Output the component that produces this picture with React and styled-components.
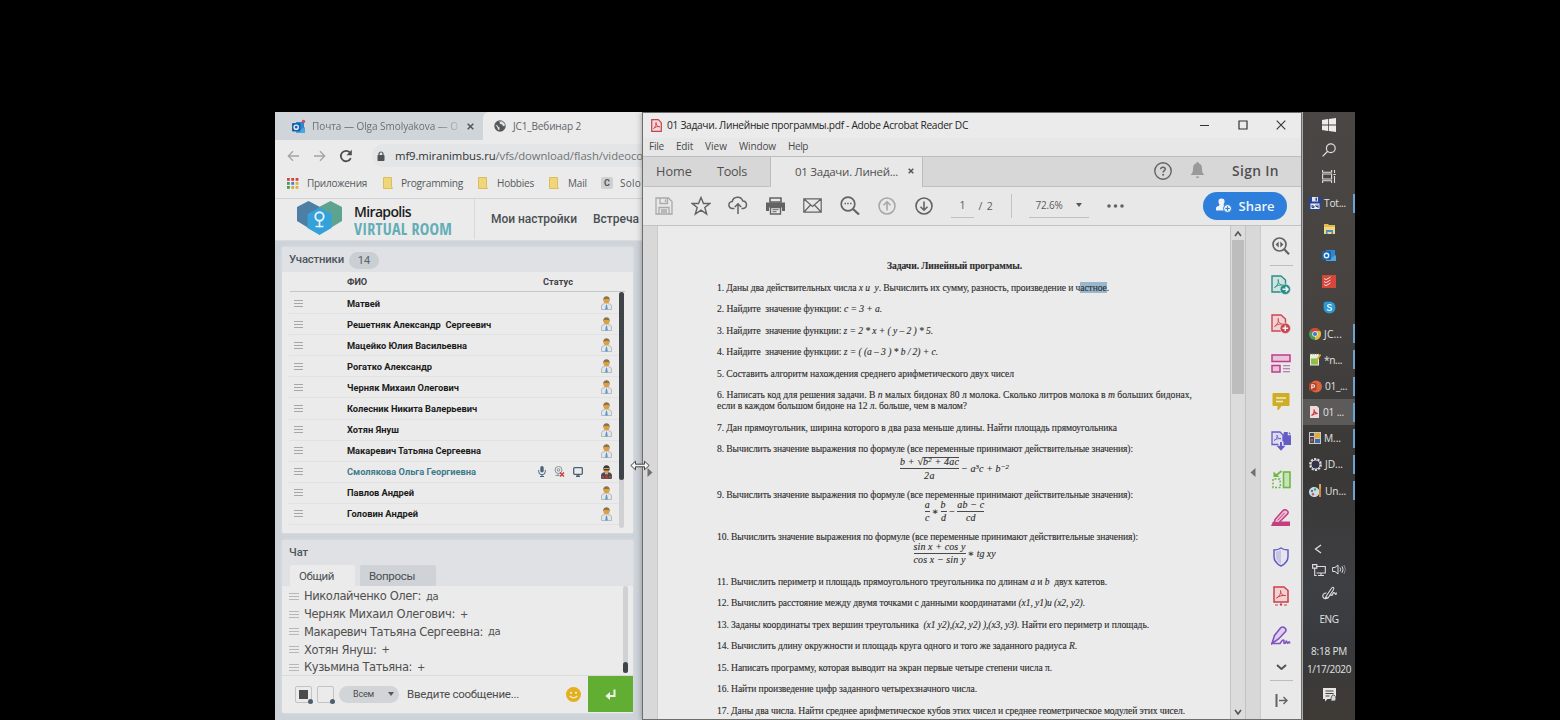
import React, { useLayoutEffect, useRef } from "react";
import styled, { createGlobalStyle } from "styled-components";

const GlobalStyle = createGlobalStyle`
  * { box-sizing: border-box; }
  body { margin: 0; background: #000; overflow: hidden; }
`;

const ui = `"Open Sans", "Noto Sans", sans-serif`;
const roboto = `Roboto, "Liberation Sans", sans-serif`;
const serif = `"Liberation Serif", "DejaVu Serif", serif`;

/* Text whose letter spacing is adjusted so the run spans a given width. */
const Run = styled.span`
  display: inline-block;
  flex: none;
  white-space: pre;
  font-family: ${(p) => p.$font || "inherit"};
  font-size: ${(p) => (p.$size ? p.$size + "px" : "inherit")};
  font-weight: ${(p) => p.$weight || "inherit"};
  color: ${(p) => p.$color || "inherit"};
  margin-left: ${(p) => p.$ml || 0}px;
`;
function Fit({ w, children, ...rest }) {
  const ref = useRef(null);
  useLayoutEffect(() => {
    const el = ref.current;
    el.style.letterSpacing = "0px";
    const natural = el.getBoundingClientRect().width;
    const n = el.textContent.length;
    el.style.letterSpacing = (w - natural) / n + "px";
    el.style.width = w + "px";
  }, [w]);
  return <Run ref={ref} {...rest}>{children}</Run>;
}
const IconBox = styled.span`display: flex; flex: none; margin-left: ${(p) => p.$ml || 0}px;`;

const Screen = styled.div`
  width: 1560px; height: 720px; padding: 112px 205px 0 275px;
  background: #000; overflow: hidden;
`;
const Desktop = styled.div`
  position: relative; display: flex; width: 1080px; height: 608px; overflow: hidden;
`;

/* ---------- Browser ---------- */
const Browser = styled.section`
  width: 367px; height: 608px; flex: none; overflow: hidden;
  display: flex; flex-direction: column; background: #cdd3d9;
`;
const TabStrip = styled.div`
  height: 28px; flex: none; display: flex; background: #d0d5da; font-family: ${ui};
`;
const BrowserTab = styled.div`
  width: ${(p) => p.$w}px; flex: none; display: flex; align-items: center;
  padding-left: ${(p) => p.$pl}px;
  background: ${(p) => (p.$active ? "#ebebeb" : "transparent")};
  border-radius: ${(p) => (p.$active ? "6px 0 0 0" : 0)};
`;
const Faded = styled.div`
  display: flex; width: 153px; flex: none;
  mask-image: linear-gradient(90deg, #000 84%, rgba(0,0,0,.25));
`;
const AddressRow = styled.div`
  height: 31px; flex: none; display: flex; align-items: center; background: #ebebeb; padding-left: 12px; overflow: hidden;
`;
const NavIcons = styled.div`display: flex; gap: 13px; width: 85px; flex: none; align-items: center;`;
const Omnibox = styled.div`
  width: 282px; height: 23px; flex: none; background: #e4e5e6; border-radius: 12px 0 0 12px;
  display: flex; align-items: center; padding-left: 5px; color: #707375; font-family: ${ui};
  b { font-weight: 400; color: #303234; }
`;
const Bookmarks = styled.div`
  height: 28px; flex: none; display: flex; align-items: center; background: #ebebeb;
  border-bottom: 1px solid #d2d3d4; padding: 0 0 3px 12px; font-family: ${ui}; color: #55585b; overflow: hidden;
`;
const Letter = styled.span`
  width: 12px; height: 12px; background: #cfd0d1; color: #555; border-radius: 2px;
  font: 700 9px/12px ${roboto}; text-align: center;
`;
const RoomHeader = styled.div`
  height: 42px; flex: none; display: flex; background: #ebebeb; border-bottom: 1px solid #d9dcdf;
`;
const Brand = styled.div`
  width: 200px; display: flex; padding: 2px 0 0 21px; border-right: 1px solid #d7d8d9; height: 40px;
`;
const BrandText = styled.div`
  display: flex; flex-direction: column; padding: 3px 0 0 11px;
  font-family: "Liberation Sans Narrow", "Open Sans Condensed", ${roboto};
`;
const BrandLine = styled.div`height: ${(p) => p.$h}px; display: flex; align-items: center; line-height: 1;`;
const RoomNav = styled.nav`
  display: flex; align-items: center; padding: 0 0 1px 16px; color: #4a4f54; font-family: ${roboto}; font-size: 12px;
`;
const Panel = styled.section`
  width: 351px; height: ${(p) => p.$h}px; margin: ${(p) => p.$mt}px 0 0 7px; flex: none;
  background: #ebebeb; display: flex; flex-direction: column; font-family: ${roboto};
  border-radius: 1px; box-shadow: 0 0 3px rgba(225, 229, 233, .9);
`;
const PanelHeader = styled.div`
  height: ${(p) => p.$h}px; flex: none; display: flex; align-items: center; padding-left: 7px;
  background: #dfe1e4; color: #4c555e;
`;
const Badge = styled.span`
  margin: 1px 0 0 5px; width: 30px; height: 17px; border-radius: 9px; background: #cacfd4;
  font-size: 11px; line-height: 17px; text-align: center; color: #59636c;
`;
const TableHead = styled.div`
  height: 20px; margin: 0 8px; flex: none; display: flex; align-items: center;
  border-bottom: 1px solid #c6c6c6; color: #3f4245; font-size: 9.2px; font-weight: 700;
`;
const TableBody = styled.div`display: flex; flex: 1; min-height: 0;`;
const People = styled.div`width: 330px; margin-left: 7px; padding-top: 1px; display: flex; flex-direction: column;`;
const Person = styled.div`
  height: 21.1px; flex: none; display: flex; align-items: center; padding-left: 5px;
  border-bottom: 1px solid #e2e2e3; font-size: 9.3px; font-weight: 700;
  color: ${(p) => (p.$self ? "#407b8c" : "#1c1c1c")};
`;
const Burger = styled.span`
  width: ${(p) => p.$w || 9}px; height: 7px; flex: none;
  border-top: 1px solid #a6a6a6; border-bottom: 1px solid #a6a6a6;
  display: flex; align-items: center;
  &::after { content: ""; width: 100%; height: 1px; background: #a6a6a6; }
`;
const StatusIcons = styled.div`
  margin-left: auto; display: flex; gap: 8px; align-items: center; padding-right: 18px;
`;
const AvatarSlot = styled.div`width: 18px; display: flex; margin-left: ${(p) => (p.$auto ? "auto" : 0)};`;
const Track = styled.div`
  width: 5px; height: ${(p) => p.$h}px; border-radius: 3px; background: #cfd1d3; display: flex; flex-direction: column;
  justify-content: ${(p) => (p.$end ? "flex-end" : "flex-start")};
`;
const Thumb = styled.div`height: ${(p) => p.$h}px; border-radius: 3px; background: #3e4447;`;

const ChatTabs = styled.div`height: 21px; flex: none; display: flex; gap: 5px; padding-left: 8px; background: #dfe1e4;`;
const ChatTab = styled.div`
  width: ${(p) => p.$w}px; height: 21px; padding-left: 9px; display: flex; align-items: center; font-size: 11.5px; color: #4b4f52;
  background: ${(p) => (p.$active ? "#ebebeb" : "#cfd2d6")}; border-radius: 2px 2px 0 0;
`;
const ChatBody = styled.div`height: 90px; flex: none; display: flex; border-bottom: 1px solid #d8dadb;`;
const Messages = styled.div`
  width: 341px; display: flex; flex-direction: column; padding: 1.5px 0 0 7px;
  font-family: "DejaVu Sans", Verdana, sans-serif; color: #505050;
`;
const Message = styled.div`height: 17.75px; flex: none; display: flex; align-items: center; ${Burger} { opacity: .75; margin-right: 5px; }`;
const Compose = styled.div`height: 36px; display: flex; align-items: center; padding-left: 13px; color: #4d4d4d;`;
const Swatch = styled.span`
  position: relative; width: 17px; height: 17px; margin-right: 5px; border: 1px solid #c3c3c3; border-radius: 2px; display: flex;
  align-items: center; justify-content: center; flex: none;
  &::before { content: ""; width: 9px; height: 9px; background: ${(p) => p.$fill}; }
  &::after {
    content: ""; position: absolute; right: -2px; bottom: -2px; width: 5px; height: 5px; border-radius: 50%;
    background: #4a6070;
  }
`;
const Recipient = styled.div`
  width: 60px; height: 17px; border-radius: 9px; background: #d2d5d8; margin-right: 8px; display: flex; align-items: center;
  padding-left: 14px; font-size: 9px; flex: none;
`;
const Caret = styled.span`
  border: ${(p) => p.$s || 3}px solid transparent; border-top: ${(p) => (p.$s || 3) + 1}px solid #55585b; border-bottom: 0;
  margin-left: ${(p) => p.$ml || 0}px;
`;
const SendButton = styled.button`
  width: 45px; height: 36px; border: 0; padding: 0; margin-left: 7px; background: #62ae32; display: flex;
  align-items: center; justify-content: center;
`;

/* ---------- Acrobat ---------- */
const Acrobat = styled.section`
  width: 660px; height: 608px; flex: none; display: flex; flex-direction: column; background: #ebebeb;
  border: 1px solid #6d6d6d; border-right-color: #6c6c6c; box-shadow: -1px 0 5px rgba(60, 60, 60, .35); z-index: 1;
  font-family: ${ui};
`;
const TitleBar = styled.div`
  height: 25px; flex: none; display: flex; align-items: center; padding: 0 15px 1px 8px; color: #252525;
`;
const WindowButtons = styled.div`margin-left: auto; display: flex; gap: 28px; align-items: center;`;
const MenuBar = styled.div`
  height: 18px; flex: none; display: flex; align-items: center; gap: 12px; padding: 0 0 2px 6px; color: #4a4a4a; font-size: 10px;
  background: #e7e7e7;
`;
const DocTabs = styled.div`
  height: 31px; flex: none; display: flex; background: #d7d7d7; border-top: 1px solid #bdbdbd; color: #505050;
`;
const DocTab = styled.div`
  width: ${(p) => p.$w}px; padding: 0 0 2px ${(p) => p.$pl}px; display: flex; align-items: center; flex: none;
  background: ${(p) => (p.$active ? "#e8e8e8" : "transparent")};
  border: solid ${(p) => (p.$active ? "#bcbcbc" : "transparent")}; border-width: 0 1px;
  box-shadow: ${(p) => (p.$active ? "none" : "inset 0 -1px #c0c0c0")};
`;
const TabActions = styled.div`
  flex: 1; display: flex; align-items: center; justify-content: flex-end; padding: 0 22px 3px 0; box-shadow: inset 0 -1px #c0c0c0;
`;
const Toolbar = styled.div`
  height: 39px; flex: none; display: flex; align-items: center; background: #e8e8e8; border-bottom: 1px solid #c2c2c2; padding: 0 0 1px 2px;
  color: #5b5b5b; font-size: 10.5px;
`;
const ToolSlot = styled.div`width: 37.2px; display: flex; justify-content: center; flex: none;`;
const Field = styled.div`
  width: ${(p) => p.$w}px; height: 24px; margin-left: ${(p) => p.$ml}px; border-bottom: 1px solid #c0c0c0; display: flex; align-items: center;
  padding-left: ${(p) => p.$pl}px; flex: none;
`;
const Separator = styled.span`width: 1px; height: 24px; background: #c3c3c3; margin-left: 17px;`;
const ShareButton = styled.button`
  width: 84px; height: 28px; margin-left: 79px; padding: 0 0 0 13px; border: 0; border-radius: 14px; background: #2d7fdb;
  display: flex; align-items: center; color: #f0f4f8; flex: none;
`;
const Workspace = styled.div`flex: 1; display: flex; min-height: 0;`;
const Gutter = styled.div`
  width: ${(p) => p.$w || 15}px; flex: none; background: #d8d8d8; display: flex; align-items: center; justify-content: center;
  border-left: ${(p) => (p.$line ? "1px solid #c2c2c2" : "0")}; border-right: 1px solid #cacaca;
`;
const Paper = styled.article`
  width: 572px; flex: none; overflow: hidden; background: #ebebeb; padding: 33.5px 39px 0 59px; display: flex; flex-direction: column;
  font-family: ${serif}; color: #2c2c2c; font-size: 9.6px; line-height: 12px; -webkit-text-stroke: .12px #333;
`;
const Block = styled.div`
  height: ${(p) => p.$h}px; flex: none; display: flex; flex-direction: column; width: 475px;
  align-items: ${(p) => (p.$center ? "center" : "flex-start")};
  font-weight: ${(p) => (p.$center ? 700 : 400)};
  line-height: ${(p) => p.$lh || 12}px;
`;
const Marked = styled.mark`background: #9bb7cb; color: #26343f; padding: 0;`;
const Formula = styled.div`
  height: ${(p) => p.$h}px; width: 475px; display: flex; align-items: center; justify-content: center; gap: 2px; font-style: italic; font-size: 10px;
  sup { font-size: 7px; line-height: 0; vertical-align: 3.5px; }
`;
const Fraction = styled.span`display: flex; flex-direction: column; align-items: center;`;
const Top = styled.span`
  border-bottom: 1px solid #4a4a4a; height: ${(p) => p.$h || 12}px; line-height: ${(p) => (p.$h ? 13 : 10)}px; display: flex; justify-content: center;
`;
const Bottom = styled.span`height: ${(p) => p.$h || 12}px; line-height: ${(p) => p.$h || 12}px; display: flex;`;
const Root = styled.span`border-top: 1px solid #4a4a4a; display: inline-block; height: 10px; line-height: 8px;`;
const ScrollColumn = styled.div`
  width: 15px; flex: none; border-left: 1px solid #c2c2c2; background: #dcdcdc; display: flex; flex-direction: column;
  align-items: center; padding: 5px 0 4px;
`;
const ScrollThumb = styled.div`width: 12px; height: 154px; background: #bdbdbd; margin: 3px 0 auto;`;
const ToolsPane = styled.aside`
  flex: 1; display: flex; flex-direction: column; align-items: center; background: #e9e9e9;
`;
const PaneItem = styled.div`height: ${(p) => p.$h}px; display: flex; align-items: center; justify-content: center; flex: none;`;
const PaneLine = styled.div`width: 23px; height: 1px; background: #bdbdbd; flex: none;`;

/* ---------- Taskbar ---------- */
const Taskbar = styled.aside`
  width: 53px; flex: none; border-left: 1px solid #b5b5b5; display: flex; flex-direction: column;
  background: linear-gradient(#4a4644, #464341 30%, #3a3837 60%, #3e3f43 78%, #393a3d 88%, #3f3a35);
  color: #e2e2e2; font-family: ${ui};
`;
const TaskItem = styled.div`
  height: ${(p) => p.$h || 26.15}px; flex: none; display: flex; align-items: center;
  justify-content: ${(p) => (p.$label ? "flex-start" : "center")}; padding-left: ${(p) => (p.$label ? 6 : 0)}px;
  background: ${(p) => (p.$active ? "#5d5b5a" : "transparent")};
  gap: 3px;
  &::after {
    content: ""; width: 2px; height: 19px; margin-left: auto;
    background: #6ba4cf; display: ${(p) => (p.$label ? "block" : "none")};
  }
`;
const Tray = styled.div`margin-top: auto; display: flex; flex-direction: column; align-items: center;`;
const TrayRow = styled.div`
  height: ${(p) => p.$h}px; display: flex; align-items: center; justify-content: center; gap: 6px; padding-right: ${(p) => p.$pr || 0}px;
`;
const ResizeCursor = styled.div`position: absolute; left: 355px; top: 348px; z-index: 3; display: flex;`;

/* ---------- Icons ---------- */
const Svg = ({ w, h, children, ...r }) => (
  <svg width={w} height={h} viewBox={`0 0 ${w} ${h}`} fill="none" {...r}>{children}</svg>
);
const OutlookIcon = () => (
  <Svg w={14} h={14}><path d="M4 2h9v9H4z" fill="#2d86d1" /><path d="M4 8l5 2 5-3v6H4z" fill="#4aa5e0" /><rect x="0" y="3" width="9" height="9" rx="1" fill="#1763ad" /><circle cx="4.500" cy="7.500" r="2.200" stroke="#eee" strokeWidth="1.400" /></Svg>
);
const OutlookTabIcon = () => (
  <Svg w={15} h={15}><path d="M5 3h8v9H5z" fill="#2d86d1" /><path d="M5 9l4 2 5-3v6H5z" fill="#4aa5e0" /><rect x="1" y="4" width="8.500" height="8.500" rx="1" fill="#1763ad" /><circle cx="5.200" cy="8.200" r="2.100" stroke="#eee" strokeWidth="1.400" /><circle cx="12.500" cy="2.500" r="1.700" fill="#d34b52" /></Svg>
);
const GlobeIcon = () => (
  <Svg w={12} h={12}><circle cx="6" cy="6" r="5.700" fill="#54585b" /><path d="M1.500 4.500l2 1 1 1.500 1.200.6-.5 2.600-1.200-.8-.6-2zM4.500 1.500l1.500 1-.3 1.500 2.200.3 1 1.700 1.600.3.4-2L8.500 1.600z" fill="#e2e2e2" /></Svg>
);
const Cross = ({ s = 7, c = "#555", t = 1.5 }) => <Svg w={s} h={s}><path d={`M.7.7L${s - 0.7} ${s - 0.7}M${s - 0.7} .7L.7 ${s - 0.7}`} stroke={c} strokeWidth={t} /></Svg>;
const ArrowIcon = ({ flip }) => (
  <Svg w={13} h={12} transform={flip ? "scale(-1 1)" : undefined}><path d="M12 6H1.500M6 1.200L1.300 6 6 10.800" stroke="#a2a4a6" strokeWidth="1.300" /></Svg>
);
const ReloadIcon = () => <Svg w={14} h={14}><path d="M11.800 9.200A5.200 5.200 0 1 1 10.800 3.400" stroke="#4c4f52" strokeWidth="1.800" /><path d="M12.800.8v5.400H7.400z" fill="#4c4f52" /></Svg>;
const LockIcon = () => <Svg w={8} h={10}><rect x=".5" y="4" width="7" height="6" rx=".8" fill="#505356" /><path d="M2 4.500V3a2 2 0 0 1 4 0v1.500" stroke="#505356" strokeWidth="1.200" /></Svg>;
const AppsIcon = () => (
  <Svg w={12} h={11}>{["#d3453c", "#d3453c", "#d3453c", "#4a9b58", "#4080d0", "#e0b040", "#4a9b58", "#d8aa35", "#e0b040"].map((c, i) => (
    <rect key={i} x={(i % 3) * 4.3} y={Math.floor(i / 3) * 4} width="2.800" height="2.800" fill={c} />))}</Svg>
);
const FolderMark = () => <Svg w={10} h={12}><path d="M.5.5h8v9.200l1 1.800h-9z" fill="#efd677" stroke="#d9bd60" /></Svg>;
const RoomLogo = () => (
  <Svg w={47} h={35}>
    <path d="M1 6L12.500 0 24 6v14L12.500 27 1 20z" fill="#4d7ea4" />
    <path d="M23 6l11.500-6L46 6v14l-11.500 7L23 20z" fill="#5da391" />
    <path d="M11.500 13L23.500 6.500 35.500 13v14L23.500 34 11.500 27z" fill="#35a1db" />
    <circle cx="23.500" cy="15.500" r="4.200" stroke="#e6f2f8" strokeWidth="1.900" />
    <path d="M23.500 20v6.500M19.500 25.500h8" stroke="#e6f2f8" strokeWidth="1.700" />
  </Svg>
);
const Avatar = ({ dark }) => (
  <Svg w={11} h={14}>
    <path d="M.5 13.500V10q0-2 2.500-2.300h5q2.500.3 2.500 2.300v3.500z" fill={dark ? "#4b4b4d" : "#e4e7ea"} stroke={dark ? "#444" : "#a5aeb9"} strokeWidth=".8" />
    <path d="M3.500 7.500h4l-2 3z" fill={dark ? "#e0e0e0" : "#f4f4f4"} />
    <path d="M5 8.500h1l.8 5H4.200z" fill={dark ? "#c43b32" : "#5d95c6"} />
    {dark && <path d="M1 11h2v2H1zM8 11h2v2H8z" fill="#a84a3c" />}
    <circle cx="5.500" cy="4.600" r="3" fill="#dba045" />
    <path d="M2.300 4.500C2 1.500 3.500.3 5.500.3S9 1.500 8.700 4.500L7.700 3H3.300z" fill={dark ? "#3b3937" : "#8b7447"} />
    {dark && <path d="M2.600 4h5.800v1.500H2.600z" fill="#444" />}
  </Svg>
);
const MicIcon = () => <Svg w={8} h={11}><rect x="2.300" y="0" width="3.400" height="6.500" rx="1.700" fill="#47657c" /><path d="M.7 4v1.500a3.300 3.300 0 0 0 6.600 0V4M4 9v2M2 10.500h4" stroke="#47657c" /></Svg>;
const CamIcon = () => <Svg w={11} h={11}><circle cx="4.500" cy="4" r="3.500" stroke="#8c9296" /><circle cx="4.500" cy="4" r="1.300" stroke="#8c9296" /><path d="M1.500 9.500h4M4 7.500v2" stroke="#8c9296" /><path d="M6 6.500l4 4M10 6.500l-4 4" stroke="#cf3f45" strokeWidth="1.500" /></Svg>;
const MonitorIcon = () => <Svg w={10} h={10}><rect x=".7" y=".7" width="8.600" height="6.600" rx=".8" stroke="#4b6274" strokeWidth="1.300" /><path d="M3 9.300h4M5 7v2" stroke="#4b6274" strokeWidth="1.400" /></Svg>;
const SmileIcon = () => <Svg w={15} h={15}><circle cx="7.500" cy="7.500" r="7.500" fill="#e3b021" /><circle cx="5" cy="5.800" r="1.100" fill="#f6ecd0" /><circle cx="10" cy="5.800" r="1.100" fill="#f6ecd0" /><path d="M3.700 9q3.800 3.800 7.600 0" stroke="#f6ecd0" strokeWidth="1.300" /></Svg>;
const EnterIcon = () => <Svg w={11} h={11}><path d="M9.500.5V7H3" stroke="#eef5e8" strokeWidth="2" /><path d="M5 3v8L.3 7z" fill="#eef5e8" /></Svg>;

const PdfFile = () => <Svg w={11} h={13}><path d="M.7.7h6.600l3 3v8.600H.7z" fill="#f0dada" stroke="#c6414a" strokeWidth="1.200" /><path d="M2.500 9.500C4.500 8 5.500 5.500 5 3.500c-.5 2 1.500 4.500 3.800 4.300C7 7 4 8 2.500 9.500z" stroke="#c6414a" strokeWidth=".9" /></Svg>;
const g = "#636363";
const SaveIcon = () => <Svg w={18} h={18}><path d="M1 1h12.500L17 4.500V17H1zM5 1v5.500h7.500V1M4 17v-6.500h10V17M6 13h6M6 15h6M10.500 2.500v2.500" stroke="#a9a9a9" strokeWidth="1.300" /></Svg>;
const StarIcon = () => <Svg w={20} h={20}><path d="M10 1.500l2.500 6h6.300l-5 4 1.900 6.500L10 14.200 4.300 18l1.900-6.500-5-4h6.300z" stroke={g} strokeWidth="1.400" /></Svg>;
const CloudIcon = () => <Svg w={20} h={19}><path d="M6.500 12.500H4.500a3.500 3.500 0 0 1-.3-7A5.500 5.500 0 0 1 14.800 5a3.800 3.800 0 0 1 .7 7.500h-2" stroke={g} strokeWidth="1.500" /><path d="M10 18V8M6.800 11L10 7.800l3.200 3.200" stroke={g} strokeWidth="1.500" /></Svg>;
const PrintIcon = () => <Svg w={19} h={18}><path d="M4 1h11v4H4z" stroke={g} strokeWidth="1.600" /><path d="M0 5.500h19V14h-3v-3.500H3V14H0z" fill={g} /><path d="M4.500 10.500h10V17h-10z" fill="#e8e8e8" stroke={g} strokeWidth="1.400" /><path d="M6.500 12.700h6M6.500 14.700h4" stroke={g} /></Svg>;
const MailIcon = () => <Svg w={19} h={15}><path d="M.8.8h17.400v13.400H.8zM1 1l8.500 7.500L18 1M1 14l6.500-7M18 14l-6.500-7" stroke={g} strokeWidth="1.200" /></Svg>;
const FindIcon = () => <Svg w={20} h={19}><circle cx="8" cy="8" r="6.800" stroke={g} strokeWidth="1.700" /><path d="M13 13l6 5.500" stroke={g} strokeWidth="2.200" /><path d="M4.500 7.500h1.500M7.200 7.500h1.500M10 7.500h1.500" stroke={g} strokeWidth="1.400" /></Svg>;
const CircleArrow = ({ down, c }) => <Svg w={18} h={18} transform={down ? "scale(1 -1)" : undefined}><circle cx="9" cy="9" r="8" stroke={c} strokeWidth="1.600" /><path d="M9 13.500V5M5.500 8.300L9 4.800l3.500 3.500" stroke={c} strokeWidth="1.600" /></Svg>;
const HelpIcon = () => <Svg w={18} h={18}><circle cx="9" cy="9" r="8.200" stroke={g} strokeWidth="1.400" /><path d="M6.700 7.200q.2-2 2.300-2t2.300 1.900c0 1.500-2.200 1.600-2.200 3.400" stroke={g} strokeWidth="1.500" /><circle cx="9.100" cy="12.800" r="1" fill={g} /></Svg>;
const BellIcon = () => <Svg w={15} h={17}><path d="M7.500 0q1.200 0 1.200 1.300Q12 2.300 12 6.500c0 4 1 5 2.500 6.500H.5C2 11.500 3 10.500 3 6.500q0-4.200 3.300-5.200Q6.300 0 7.500 0zM5.800 14.500h3.400q-.4 1.700-1.700 1.700t-1.700-1.700z" fill="#9a9a9a" /></Svg>;
const PersonPlus = () => <Svg w={16} h={15}><path d="M5.500.5a3 3 0 0 1 3 3.300c0 1.500-.7 2.200-1 3 0 1 2 1.200 3 2v3.700H0V10c0-1.700 3.500-1.700 3.500-3.200-.3-.8-1-1.500-1-3A3 3 0 0 1 5.500.5z" fill="#eef3f8" /><circle cx="11.500" cy="10.500" r="4" fill="#eef3f8" stroke="#2d7fdb" /><path d="M11.500 8.300v4.400M9.300 10.500h4.400" stroke="#2d7fdb" strokeWidth="1.200" /></Svg>;
const Chevron = ({ up, w = 10, c = "#555", t = 1.6 }) => <Svg w={w} h={6} transform={up ? "scale(1 -1)" : undefined}><path d={`M1 1l${w / 2 - 1} 4 ${w / 2 - 1}-4`} stroke={c} strokeWidth={t} /></Svg>;

const PdfBadge = ({ c, f, plus }) => (
  <Svg w={20} h={20}><path d="M1 1h9l4.500 4v12H1z" fill={f} stroke={c} strokeWidth="1.400" /><path d="M3.500 12.500C6.500 11 8 7 7.200 4.500c-.5 3 2 6 5 5.700-3-.8-6.700.3-8.700 2.300z" stroke={c} strokeWidth=".9" /><circle cx="14.300" cy="14.300" r="5.200" fill={c} stroke="#e9e9e9" strokeWidth=".6" />
    <path d={plus ? "M14.300 11.500v5.600M11.500 14.300h5.600" : "M11.500 14.300h5M14.600 11.900l2.400 2.400-2.400 2.400"} stroke="#f2f2f2" strokeWidth="1.500" /></Svg>
);
const ZoomPane = () => <Svg w={18} h={18}><circle cx="7.500" cy="7.500" r="6.500" stroke={g} strokeWidth="1.700" /><path d="M12.200 12.200l4.800 5" stroke={g} strokeWidth="2.200" /><path d="M6.700 4.500v6L3.500 7.500zM8.300 4.500v6l3.200-3z" fill={g} /></Svg>;
const OrganizeIcon = () => <Svg w={20} h={19}><path d="M1 1h18v6.500H1zM1 11.500h8v6.500H1z" fill="#e8c4da" stroke="#bf3d8b" strokeWidth="1.500" /><path d="M12 11.700h7M12 14.700h7M12 17.700h7" stroke="#a6659a" strokeWidth="1.100" /></Svg>;
const CommentIcon = () => <Svg w={18} h={18}><path d="M1 .5h16v12H9.500L6 17v-4.500H1z" fill="#cfae27" stroke="#cfae27" /><path d="M4 5h10M4 8.500h7" stroke="#f0ead0" strokeWidth="1.400" /></Svg>;
const ExportIcon = () => <Svg w={20} h={20}><path d="M13 1h3.800v3.200H20V14h-8V5z" fill="#655dc7" /><path d="M17.800.8l2.200 2.400h-2.200z" fill="#655dc7" /><path d="M1 1h8l3 3v9.500H1z" fill="#dedbf0" stroke="#655dc7" strokeWidth="1.300" /><path d="M3 9.500c2.500-1 3.700-3.500 3-5.500 0 2.500 1.500 4 4 3.700-2.500-.5-5 .3-7 1.800z" stroke="#655dc7" strokeWidth=".8" /><path d="M10 10.500v5" stroke="#e9e9e9" strokeWidth="5" /><path d="M10 11v6" stroke="#655dc7" strokeWidth="2" /><path d="M5.500 14.800h9L10 19.800z" fill="#655dc7" /></Svg>;
const CompareIcon = () => <Svg w={19} h={19}><rect x="11.500" y="2" width="6.500" height="15.500" fill="#c6e3b5" stroke="#6fb845" strokeWidth="1.600" /><path d="M8 9H1v8.500h7.500z" stroke="#6fb845" strokeWidth="1.500" strokeDasharray="2 1.500" /><path d="M9.500 1L4 5.500" stroke="#6fb845" strokeWidth="1.800" /><path d="M1.500 1.500v5.500h6z" fill="#6fb845" /></Svg>;
const RedactIcon = () => <Svg w={20} h={18}><path d="M0 17l2-4.500h4l4 0h9V17z" fill="#c43f7f" /><path d="M4 10.500L12 1.500q2-1.500 4 0t.5 3.500L8 13.500 3.500 14z" fill="#e9bfd3" stroke="#c43f7f" strokeWidth="1.500" /><path d="M6.500 11.500L13.500 4" stroke="#c43f7f" /></Svg>;
const ShieldIcon = () => <Svg w={16} h={20}><path d="M8 1q3 2 7 2v6.500c0 4.500-3 7.500-7 9.500-4-2-7-5-7-9.500V3q4 0 7-2z" fill="#e6e5ef" stroke="#615dc4" strokeWidth="1.500" /><path d="M8 3v14c-3.500-2-5-4.500-5-7.500V4.500Q6 4 8 3z" fill="#c6c5e4" /></Svg>;
const OptimizeIcon = () => <Svg w={16} h={20}><path d="M1 1h10l4 3.500V16H1z" fill="#f0d2d2" stroke="#cc3f48" strokeWidth="1.500" /><path d="M3.500 12C7 10 8 7 7.500 4.500 7.500 7.500 9.500 10 12.500 9.500 9.500 9 6 10 3.500 12z" stroke="#cc3f48" strokeWidth="1" /><path d="M2 19h3M11 19h3" stroke="#cc3f48" strokeWidth="1.200" /><circle cx="8" cy="18.500" r="1.200" fill="#cc3f48" /></Svg>;
const SignIcon = () => <Svg w={20} h={19}><path d="M1 17.500L3.500 9.500 9.500 2q2-1.800 4.200-.2t.6 4L7.500 13z" fill="#ddd0ee" stroke="#8053c0" strokeWidth="1.600" /><path d="M0 17.500h9q3.500-5.500 4-2.500c0 1.500-.5 2.500.7 2.500s1.300-3.500 2-2 .3 2 1.300 1.500 1-2 1.500-.5l.5 1" stroke="#8053c0" strokeWidth="1.600" /></Svg>;
const CollapseIcon = () => <Svg w={13} h={13}><path d="M1.500 0v13" stroke={g} strokeWidth="2" /><path d="M4 6.500h8M8.500 3L12 6.500 8.500 10" stroke={g} strokeWidth="1.400" /></Svg>;
const Triangle = ({ left }) => <Svg w={6} h={9}><path d={left ? "M5.500 0v9L.5 4.500z" : "M.5 0v9l5-4.500z"} fill="#707070" /></Svg>;

const WinIcon = () => <Svg w={14} h={14}><path d="M0 2l6-.9v5.500H0zM6.800 1L14 0v6.600H6.800zM0 7.400h6v5.500L0 12zM6.800 7.400H14V14l-7.200-1z" fill="#ececec" /></Svg>;
const SearchIcon = () => <Svg w={14} h={14}><circle cx="8.800" cy="5.200" r="4.400" stroke="#ddd" strokeWidth="1.200" /><path d="M5.700 8.300L.6 13.400" stroke="#ddd" strokeWidth="1.300" /></Svg>;
const TaskViewIcon = () => <Svg w={14} h={13}><path d="M.6 0v2.200h9V0M.6 13v-2.200h9V13M.6 4h9v5h-9zM12.500 0v3M12.500 6v7M11.300 4.500h2.500" stroke="#ddd" strokeWidth="1.100" /></Svg>;
const TotalIcon = () => <Svg w={12} h={13}><path d="M0 0h12v13H0z" fill="#27449c" /><path d="M3 0h6v4.500H3z" fill="#e0e5f4" /><path d="M6.500.7h1.500v3H6.500z" fill="#27449c" /><path d="M1.500 6.500h9V12h-9z" fill="#eee" /><path d="M3 8v2.500h2V9H3M9 7.500V11M7 7.500V9.500h2" stroke="#34457f" /></Svg>;
const ExplorerIcon = () => <Svg w={13} h={12}><path d="M1 1h4l1 1h6v9H1z" fill="#e3bd49" /><path d="M1 4h11v7H1z" fill="#f1d887" /><path d="M3 11V7h7v4H8.500V9h-4v2z" fill="#4a8fc4" /></Svg>;
const TodoistIcon = () => <Svg w={14} h={13}><path d="M0 0h14v13H0z" fill="#d7463b" /><path d="M2 3.500l2 1.200L8.500 2M2 6.500l2 1.200L8.500 5M2 9.500l2 1.200L8.500 8" stroke="#f3dcd9" /></Svg>;
const SkypeIcon = () => <Svg w={13} h={13}><circle cx="6.500" cy="6.500" r="6" fill="#2b9bd8" /><circle cx="3.500" cy="3.500" r="3" fill="#2b9bd8" /><path d="M8.600 4.500Q8 3.500 6.500 3.500c-2.500 0-2.500 2.300 0 2.800 3 .5 2.800 3.200 0 3.200q-1.700 0-2.300-1.200" stroke="#f0f6fa" strokeWidth="1.200" /></Svg>;
const ChromeIcon = () => <Svg w={12} h={12}><circle cx="6" cy="6" r="6" fill="#3f9f55" /><path d="M6 6L.8 3A6 6 0 0 1 11.200 3z" fill="#d5463a" /><path d="M6 6V3h5.200A6 6 0 0 1 6 12z" fill="#e5b93c" /><circle cx="6" cy="6" r="2.800" fill="#eee" /><circle cx="6" cy="6" r="2.100" fill="#4079cf" /></Svg>;
const NoteIcon = () => <Svg w={12} h={13}><path d="M1 1h9v11.500H1z" fill="#e7eee0" /><path d="M2 5.500h7v6H2z" fill="#86bf4d" /><path d="M1 1h9" stroke="#777" strokeDasharray="1 1" /><path d="M11.500 1.500L6.500 9" stroke="#d8ad32" strokeWidth="1.800" /></Svg>;
const PptIcon = () => <Svg w={13} h={13}><circle cx="7" cy="6.500" r="6" fill="#d9653f" /><rect x="0" y="3" width="7.500" height="7.500" rx="1" fill="#b93e22" /><path d="M2.800 9V4.700h1.500a1.200 1.200 0 0 1 0 2.600H3" stroke="#eee" strokeWidth="1.100" /></Svg>;
const ReaderIcon = () => <Svg w={11} h={12}><path d="M1 0h7l2 2v10H1z" fill="#ecdcdc" /><path d="M2.500 9.500C4.500 8 5.500 5.500 5 3.500c0 2 1.500 4 3.700 4-2 0-4.500.5-6.200 2z" stroke="#cf353b" strokeWidth="1.200" /></Svg>;
const MIcon = () => <Svg w={12} h={12}><path d="M0 0h12v12H0z" fill="#c9c9c9" /><path d="M1 1h4v3H1z" fill="#41495b" /><path d="M5.500 1H11v5H5.500z" fill="#e0ae35" /><path d="M1 5h4v6H1z" fill="#41495b" /><path d="M1.500 7H4v2.500H1.500z" fill="#c55045" /><path d="M6 7h5v4H6z" fill="#4669a8" /></Svg>;
const GearIcon = () => <Svg w={13} h={13}><circle cx="6.500" cy="6.500" r="5.500" stroke="#ddd" strokeWidth="1.800" strokeDasharray="2.200 1.200" /><circle cx="6.500" cy="6.500" r="4.500" stroke="#ddd" strokeWidth="1" fill="#33334a" /></Svg>;
const PaintIcon = () => <Svg w={13} h={13}><path d="M5.500 3a5 5 0 1 1-1 9.900C2.500 12.800 0 11 0 8s2.500-5 5.500-5z" fill="#c5dde9" /><circle cx="3" cy="7" r="1.200" fill="#4578b9" /><circle cx="6" cy="5.500" r="1.200" fill="#4ba557" /><circle cx="4" cy="10.200" r="1.200" fill="#cc5348" /><path d="M11 0v5" stroke="#e0a060" strokeWidth="2" /><path d="M11 4.500V13" stroke="#d98338" strokeWidth="2" /></Svg>;
const NetIcon = () => <Svg w={14} h={12}><path d="M4 2.500h9.300v6.500H4.500M9 9v2.500M6 11.500h6M.6.6h4.300v3.500H.6zM2.700 4v7.500h2" stroke="#ddd" strokeWidth="1.100" /></Svg>;
const SpeakerIcon = () => <Svg w={14} h={11}><path d="M.6 3.500H3L6 1v9L3 7.500H.6z" stroke="#ddd" /><path d="M8 3.500q1.300 2 0 4M10 2.200q2.200 3.300 0 6.600" stroke="#ddd" /><path d="M12 1q2.800 4.500 0 9" stroke="#888" /></Svg>;
const PenIcon = () => <Svg w={15} h={14}><path d="M4 10.500L9 3q1.500-2.500 2.500-1.500t-.5 3L6 12l-2.500.8z" stroke="#ddd" strokeWidth="1.100" /><path d="M4.500 7C1.500 7 .3 9 1 11s3 1.500 4.500 0M8 8.500q2 2 2.800-.5T13 7.500t1.300-1" stroke="#ddd" strokeWidth="1.200" /></Svg>;
const ActionIcon = () => <Svg w={15} h={14}><path d="M1 0h13v11H5.500L3 13.500V11H1z" fill="#e6e6e6" /><path d="M3.500 3h8M3.500 5.500h8M3.500 8h4" stroke="#49443f" /><path d="M9 10q1-4 3-3t2 4l-1 2H9z" fill="#d8d8d8" stroke="#49443f" strokeWidth=".8" /></Svg>;
const CursorIcon = () => <Svg w={20} h={11}><path d="M.8 5.500L5.500 1.200v3h9v-3l4.700 4.300-4.700 4.300v-3h-9v3z" fill="#f4f4f4" stroke="#444" strokeWidth="1" /></Svg>;

/* ---------- Data ---------- */
const people = [
  ["Матвей", 33], ["Решетняк Александр  Сергеевич", 144], ["Мацейко Юлия Васильевна", 120], ["Рогатко Александр", 85],
  ["Черняк Михаил Олегович", 112], ["Колесник Никита Валерьевич", 130], ["Хотян Януш", 52], ["Макаревич Татьяна Сергеевна", 134],
  ["Смолякова Ольга Георгиевна", 129, true], ["Павлов Андрей", 67], ["Головин Андрей", 71],
];
const messages = [
  ["Николайченко Олег:", 117, "да", 12], ["Черняк Михаил Олегович:", 151, "+", 8], ["Макаревич Татьяна Сергеевна:", 179, "да", 12],
  ["Хотян Януш:", 72.5, "+", 8], ["Кузьмина Татьяна:", 108, "+", 8],
];
const same = "Вычислить значение выражения по формуле (все переменные принимают действительные значения):";
const apps = [
  [<TotalIcon />, "Tot...", 22], [<ExplorerIcon />], [<OutlookIcon />], [<TodoistIcon />], [<SkypeIcon />], [<ChromeIcon />, "JC...", 18],
  [<NoteIcon />, "*n...", 18], [<PptIcon />, "01_...", 22], [<ReaderIcon />, "01 ...", 21], [<MIcon />, "M...", 17], [<GearIcon />, "JD...", 18], [<PaintIcon />, "Un...", 21],
];
const paneTools = [
  <PdfBadge c="#278f87" f="#cfe2e0" />, <PdfBadge c="#cc4650" f="#f0d2d3" plus />, <OrganizeIcon />, <CommentIcon />, <ExportIcon />,
  <CompareIcon />, <RedactIcon />, <ShieldIcon />, <OptimizeIcon />, <SignIcon />,
];

function BrowserWindow() {
  return (
    <Browser>
      <TabStrip>
        <BrowserTab $w={208} $pl={16}>
          <OutlookTabIcon />
          <Faded><Fit w={146} $size={10} $ml={6} $color="#6b6f73">Почта — Olga Smolyakova — O</Fit></Faded>
          <IconBox $ml={8}><Cross /></IconBox>
        </BrowserTab>
        <BrowserTab $w={159} $pl={11} $active>
          <GlobeIcon /><Fit w={68} $size={10} $ml={7} $color="#606468">JC1_Вебинар 2</Fit>
        </BrowserTab>
      </TabStrip>
      <AddressRow>
        <NavIcons><ArrowIcon /><ArrowIcon flip /><ReloadIcon /></NavIcons>
        <Omnibox><LockIcon /><Fit w={248} $size={11.3} $ml={10}><b>mf9.miranimbus.ru</b>/vfs/download/flash/videoco</Fit></Omnibox>
      </AddressRow>
      <Bookmarks>
        <AppsIcon /><Fit w={60} $size={10} $ml={8}>Приложения</Fit>
        <IconBox $ml={16}><FolderMark /></IconBox><Fit w={62} $size={10.2} $ml={8}>Programming</Fit>
        <IconBox $ml={15}><FolderMark /></IconBox><Fit w={37} $size={10} $ml={9}>Hobbies</Fit>
        <IconBox $ml={15}><FolderMark /></IconBox><Fit w={19} $size={10} $ml={9}>Mail</Fit>
        <IconBox $ml={14}><Letter>C</Letter></IconBox><Fit w={21} $size={10} $ml={7}>Solo</Fit>
      </Bookmarks>
      <RoomHeader>
        <Brand>
          <RoomLogo />
          <BrandText>
            <BrandLine $h={16}><Fit w={57} $size={14} $weight={600} $color="#1d1d1d" $font={ui}>Mirapolis</Fit></BrandLine>
            <BrandLine $h={17}><Fit w={98} $size={16} $weight={700} $color="#62aeb6">VIRTUAL ROOM</Fit></BrandLine>
          </BrandText>
        </Brand>
        <RoomNav><Fit w={86} $weight={500}>Мои настройки</Fit><Fit w={46} $weight={500} $ml={16}>Встреча</Fit></RoomNav>
      </RoomHeader>
      <Panel $h={286} $mt={6}>
        <PanelHeader $h={25}><Fit w={55} $size={11.3} $weight={500}>Участники</Fit><Badge>14</Badge></PanelHeader>
        <TableHead><Fit w={20} $ml={57}>ФИО</Fit><Fit w={30} $ml={176}>Статус</Fit></TableHead>
        <TableBody>
          <People>
            {people.map(([name, w, self]) => (
              <Person key={name} $self={self}>
                <Burger /><Fit w={w} $ml={44}>{name}</Fit>
                {self && <StatusIcons><MicIcon /><CamIcon /><MonitorIcon /></StatusIcons>}
                <AvatarSlot $auto={!self}><Avatar dark={self} /></AvatarSlot>
              </Person>
            ))}
          </People>
          <Track $h={236}><Thumb $h={188} /></Track>
        </TableBody>
      </Panel>
      <Panel $h={173} $mt={7}>
        <PanelHeader $h={25}><Fit w={19} $size={11.2} $weight={500}>Чат</Fit></PanelHeader>
        <ChatTabs>
          <ChatTab $w={65} $active><Fit w={35}>Общий</Fit></ChatTab>
          <ChatTab $w={76}><Fit w={46}>Вопросы</Fit></ChatTab>
        </ChatTabs>
        <ChatBody>
          <Messages>
            {messages.map(([who, w, text, tw]) => (
              <Message key={who}><Burger $w={10} /><Fit w={w} $size={11.5}>{who}</Fit><Fit w={tw} $size={10} $ml={5}>{text}</Fit></Message>
            ))}
          </Messages>
          <Track $h={87} $end><Thumb $h={11} /></Track>
        </ChatBody>
        <Compose>
          <Swatch $fill="#4c4c4c" /><Swatch $fill="transparent" />
          <Recipient><Fit w={21}>Всем</Fit><Caret $ml={14} /></Recipient>
          <Fit w={112} $size={11.5}>Введите сообщение...</Fit>
          <IconBox $ml={47}><SmileIcon /></IconBox>
          <SendButton><EnterIcon /></SendButton>
        </Compose>
      </Panel>
    </Browser>
  );
}

function DocumentPage() {
  return (
    <Paper>
      <Block $h={22} $center><Fit w={135}>Задачи. Линейный программы.</Fit></Block>
      <Block $h={21}><Fit w={392}>1. Даны два действительных числа <i>x и  y</i>. Вычислить их сумму, разность, произведение и ч<Marked>астное</Marked>.</Fit></Block>
      <Block $h={22}><Fit w={165}>2. Найдите  значение функции: <i>c = 3 + a.</i></Fit></Block>
      <Block $h={21}><Fit w={216}>3. Найдите  значение функции: <i>z = 2 * x + ( y – 2 ) * 5.</i></Fit></Block>
      <Block $h={22}><Fit w={221}>4. Найдите  значение функции: <i>z = ( (a – 3 ) * b / 2) + c.</i></Fit></Block>
      <Block $h={21}><Fit w={297}>5. Составить алгоритм нахождения среднего арифметического двух чисел</Fit></Block>
      <Block $h={33} $lh={11.3}>
        <Fit w={475}>6. Написать код для решения задачи. В <i>n</i> малых бидонах 80 л молока. Сколько литров молока в <i>m</i> больших бидонах,</Fit>
        <Fit w={250}>если в каждом большом бидоне на 12 л. больше, чем в малом?</Fit>
      </Block>
      <Block $h={21}><Fit w={400}>7. Дан прямоугольник, ширина которого в два раза меньше длины. Найти площадь прямоугольника</Fit></Block>
      <Block $h={46}>
        <Fit w={416}>8. {same}</Fit>
        <Formula $h={28}>
          <Fraction><Top $h={14}><Fit w={59}>b + √<Root>b<sup>2</sup> + 4ac</Root></Fit></Top><Bottom $h={13}><Fit w={11}>2a</Fit></Bottom></Fraction>
          <Fit w={48}>− a<sup>3</sup>c + b<sup>−2</sup></Fit>
        </Formula>
      </Block>
      <Block $h={42}>
        <Fit w={416}>9. {same}</Fit>
        <Formula $h={22}>
          <Fraction><Top>a</Top><Bottom>c</Bottom></Fraction>∗
          <Fraction><Top><Fit w={6}>b</Fit></Top><Bottom>d</Bottom></Fraction>−
          <Fraction><Top><Fit w={27}>ab − c</Fit></Top><Bottom>cd</Bottom></Fraction>
        </Formula>
      </Block>
      <Block $h={45}>
        <Fit w={421}>10. {same}</Fit>
        <Formula $h={22}>
          <Fraction><Top><Fit w={52}>sin x + cos y</Fit></Top><Bottom><Fit w={52}>cos x − sin y</Fit></Bottom></Fraction>
          <Fit w={28}>∗ tg xy</Fit>
        </Formula>
      </Block>
      <Block $h={21}><Fit w={390}>11. Вычислить периметр и площадь прямоугольного треугольника по длинам <i>a</i> и <i>b</i>  двух катетов.</Fit></Block>
      <Block $h={22}><Fit w={368}>12. Вычислить расстояние между двумя точками с данными координатами <i>(x1, y1)и (x2, y2).</i></Fit></Block>
      <Block $h={21}><Fit w={432}>13. Заданы координаты трех вершин треугольника  <i>(x1 y2),(x2, y2) ),(x3, y3).</i> Найти его периметр и площадь.</Fit></Block>
      <Block $h={22}><Fit w={360}>14. Вычислить длину окружности и площадь круга одного и того же заданного радиуса <i>R</i>.</Fit></Block>
      <Block $h={21}><Fit w={335}>15. Написать программу, которая выводит на экран первые четыре степени числа π.</Fit></Block>
      <Block $h={22}><Fit w={260}>16. Найти произведение цифр заданного четырехзначного числа.</Fit></Block>
      <Block $h={13}><Fit w={468}>17. Даны два числа. Найти среднее арифметическое кубов этих чисел и среднее геометрическое модулей этих чисел.</Fit></Block>
    </Paper>
  );
}

function AcrobatWindow() {
  return (
    <Acrobat>
      <TitleBar>
        <PdfFile /><Fit w={301} $size={10.2} $ml={5}>01 Задачи. Линейные программы.pdf - Adobe Acrobat Reader DC</Fit>
        <WindowButtons>
          <Svg w={10} h={10}><path d="M0 5.500h9" stroke="#333" /></Svg>
          <Svg w={10} h={10}><path d="M1 1h8v8H1z" stroke="#333" strokeWidth="1.200" /></Svg>
          <Cross s={10} c="#333" t={1.1} />
        </WindowButtons>
      </TitleBar>
      <MenuBar><Fit w={15}>File</Fit><Fit w={17}>Edit</Fit><Fit w={22}>View</Fit><Fit w={37}>Window</Fit><Fit w={20}>Help</Fit></MenuBar>
      <DocTabs>
        <DocTab $w={127} $pl={12}><Fit w={36} $size={12.7}>Home</Fit><Fit w={30} $size={12.7} $ml={25}>Tools</Fit></DocTab>
        <DocTab $w={153} $pl={24} $active><Fit w={103} $size={11.5}>01 Задачи. Линей...</Fit><IconBox $ml={10}><Cross s={6} /></IconBox></DocTab>
        <TabActions><HelpIcon /><IconBox $ml={18}><BellIcon /></IconBox><Fit w={47} $size={13.8} $weight={600} $ml={27}>Sign In</Fit></TabActions>
      </DocTabs>
      <Toolbar>
        {[<SaveIcon />, <StarIcon />, <CloudIcon />, <PrintIcon />, <MailIcon />, <FindIcon />, <CircleArrow c="#a8a8a8" />, <CircleArrow down c={g} />].map((icon, i) => (
          <ToolSlot key={i}>{icon}</ToolSlot>
        ))}
        <Field $w={23} $ml={8} $pl={9}>1</Field>
        <Fit w={15} $ml={5}>/ 2</Fit>
        <Separator />
        <Field $w={60} $ml={17} $pl={7}><Fit w={27} $size={10}>72.6%</Fit><Caret $ml={13} /></Field>
        <IconBox $ml={18}><Svg w={17} h={4}><circle cx="2" cy="2" r="1.800" fill={g} /><circle cx="8.500" cy="2" r="1.800" fill={g} /><circle cx="15" cy="2" r="1.800" fill={g} /></Svg></IconBox>
        <ShareButton><PersonPlus /><Fit w={36} $size={13} $weight={600} $ml={7} $font={ui}>Share</Fit></ShareButton>
      </Toolbar>
      <Workspace>
        <Gutter><Triangle /></Gutter>
        <DocumentPage />
        <ScrollColumn><Chevron up w={8} /><ScrollThumb /><Chevron w={8} /></ScrollColumn>
        <Gutter $line $w={16}><Triangle left /></Gutter>
        <ToolsPane>
          <PaneItem $h={39}><ZoomPane /></PaneItem><PaneLine />
          {paneTools.map((icon, i) => <PaneItem key={i} $h={38.85}>{icon}</PaneItem>)}
          <PaneItem $h={26}><Chevron w={11} t={2} /></PaneItem><PaneLine />
          <PaneItem $h={38}><CollapseIcon /></PaneItem>
        </ToolsPane>
      </Workspace>
    </Acrobat>
  );
}

export default function App() {
  return (
    <>
      <GlobalStyle />
      <Screen>
        <Desktop>
          <BrowserWindow />
          <AcrobatWindow />
          <Taskbar>
            <TaskItem $h={25}><WinIcon /></TaskItem>
            <TaskItem $h={25}><SearchIcon /></TaskItem>
            <TaskItem $h={28}><TaskViewIcon /></TaskItem>
            {apps.map(([icon, label, w], i) => (
              <TaskItem key={i} $label={!!label} $active={i === 8}>{icon}{label && <Fit w={w} $size={10.2}>{label}</Fit>}</TaskItem>
            ))}
            <Tray>
              <TrayRow $h={18} $pr={23}><Svg w={8} h={10}><path d="M7 1L1.500 5 7 9" stroke="#ddd" strokeWidth="1.300" /></Svg></TrayRow>
              <TrayRow $h={23}><NetIcon /><SpeakerIcon /></TrayRow>
              <TrayRow $h={24}><PenIcon /></TrayRow>
              <TrayRow $h={28}><Fit w={19} $size={10}>ENG</Fit></TrayRow>
              <TrayRow $h={36}><Fit w={36} $size={10}>8:18 PM</Fit></TrayRow>
              <TrayRow $h={0}><Fit w={44} $size={10}>1/17/2020</Fit></TrayRow>
              <TrayRow $h={51}><ActionIcon /></TrayRow>
            </Tray>
          </Taskbar>
          <ResizeCursor><CursorIcon /></ResizeCursor>
        </Desktop>
      </Screen>
    </>
  );
}
